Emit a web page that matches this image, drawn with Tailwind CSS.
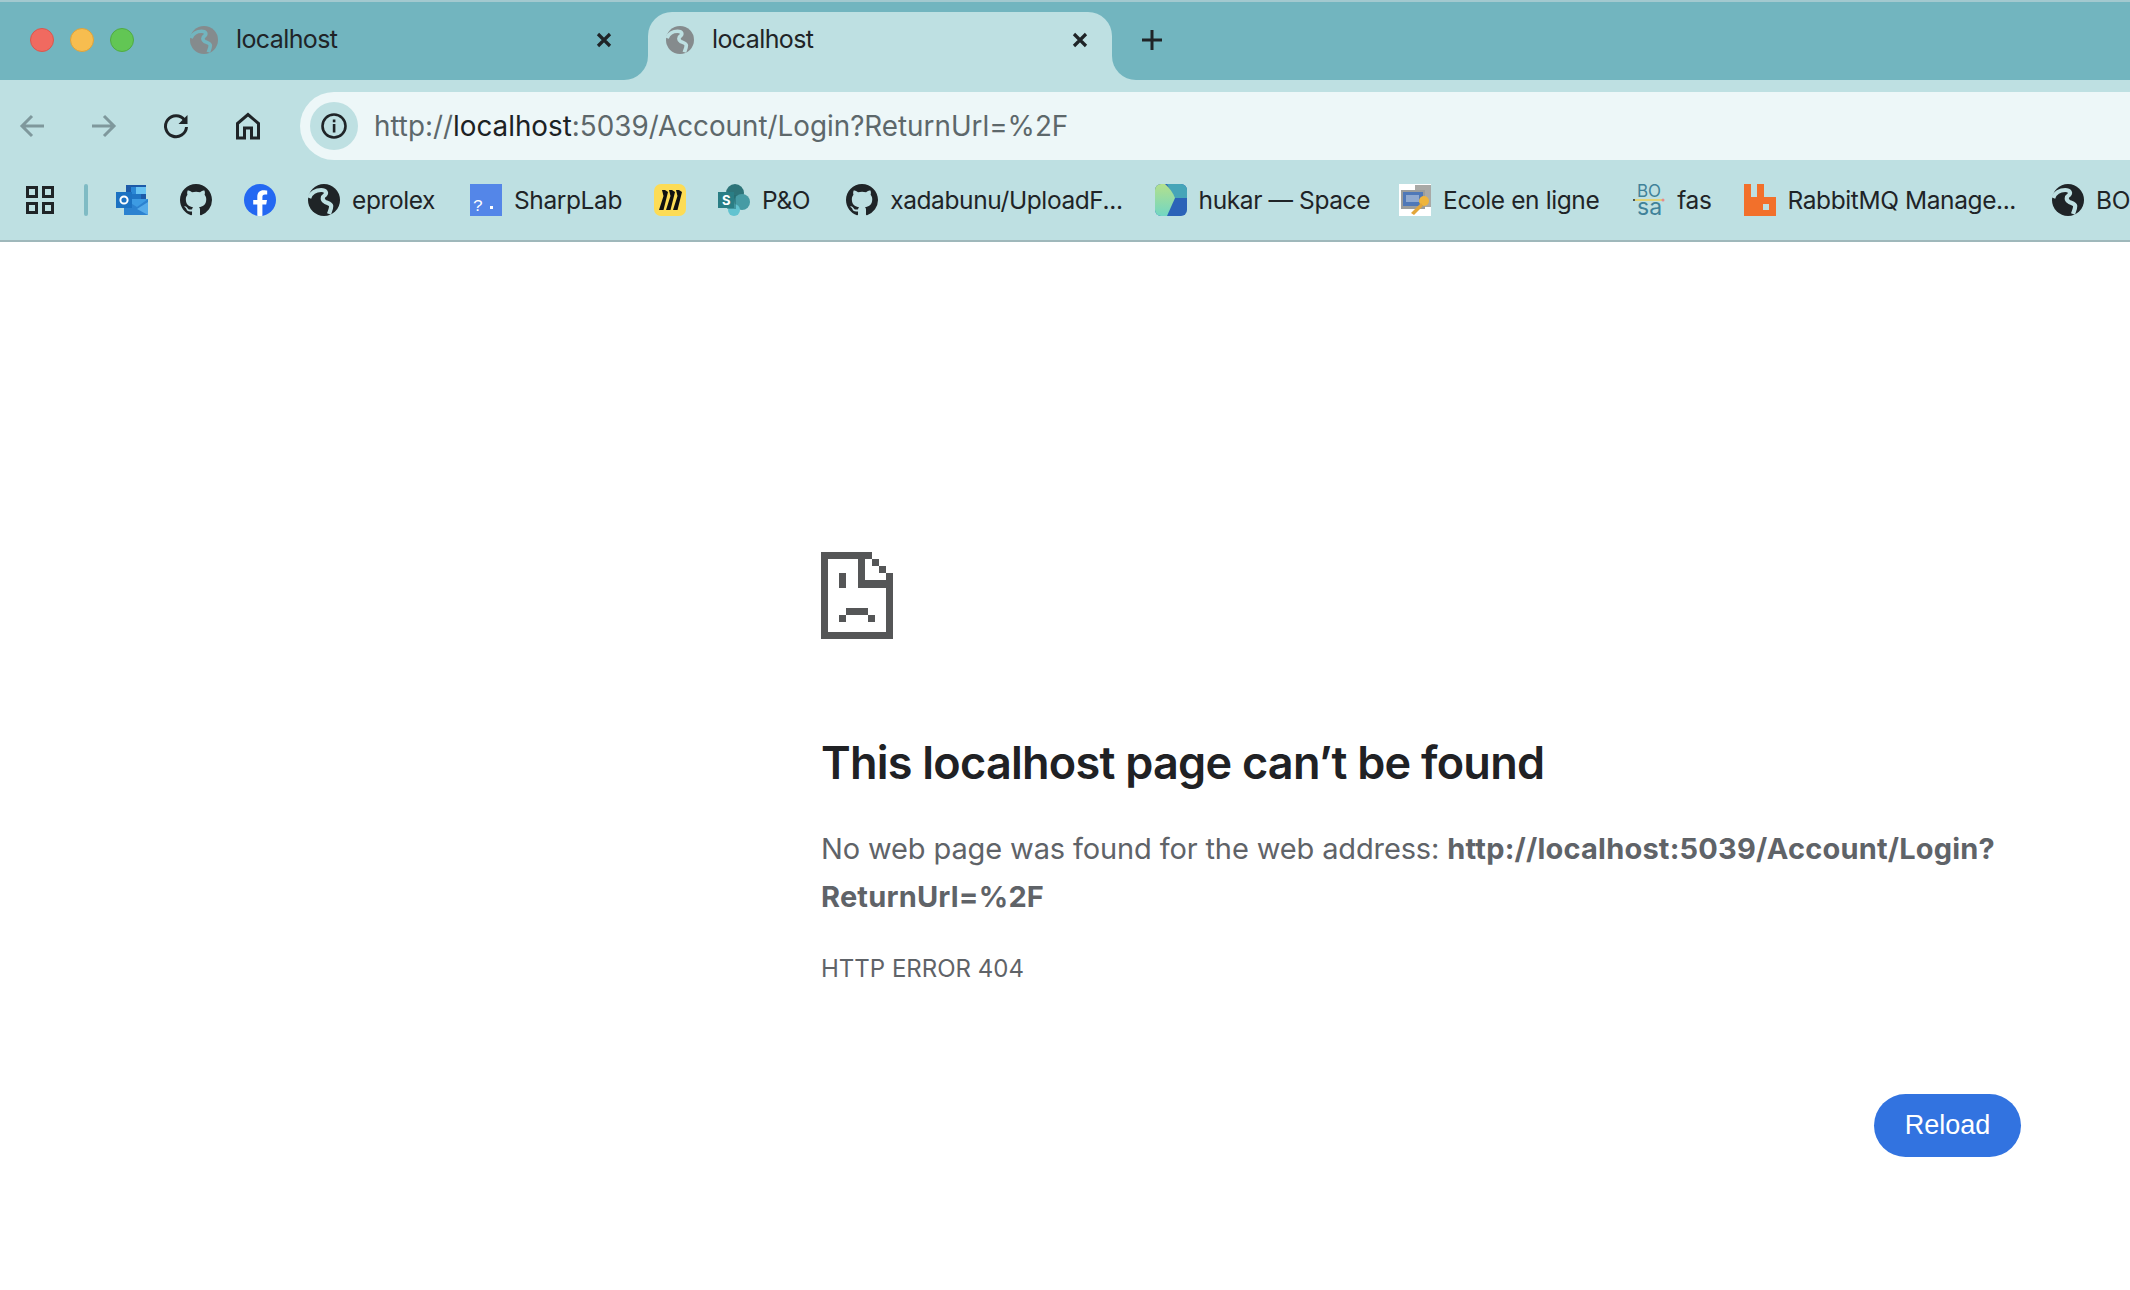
<!DOCTYPE html>
<html lang="en">
<head>
    <meta charset="UTF-8">
    <meta name="viewport" content="width=device-width, initial-scale=1.0">
    <title>localhost</title>
    <script src="https://cdn.jsdelivr.net/npm/@tailwindcss/browser@4"></script>
</head>
<body class="bg-white font-['Inter','Noto_Sans',sans-serif]">
    <div class="w-[2130px] h-[1290px] overflow-hidden flex flex-col">
        <!-- Tab strip -->
        <div class="h-[80px] bg-[#72b5bf] border-t-2 border-[#a3c9cf] flex items-end shrink-0">
            <div class="flex items-center gap-4 pl-[30px] h-[68px] pb-[12px] w-[172px] shrink-0">
                <span class="w-6 h-6 rounded-full bg-[#f06a60] border border-[#d9574e]"></span>
                <span class="w-6 h-6 rounded-full bg-[#f7bd4f] border border-[#dca23c]"></span>
                <span class="w-6 h-6 rounded-full bg-[#62c654] border border-[#50ab43]"></span>
            </div>
            <!-- Inactive tab -->
            <div class="w-[476px] h-[68px] pl-[18px] pr-[32px] pb-[12px] flex items-center shrink-0">
                <svg class="w-7 h-7 shrink-0" viewBox="0 0 16 16"><circle cx="8" cy="8" r="8" fill="#858b8d"/><path d="M0.6 7C1.5 4.5 4 3 6.6 3C9 3 9.5 4.5 8.5 5.5C7 6.5 7 8 8.5 8.9C10 9.6 11.5 9.8 11.6 11C11.6 12.5 11 13.5 10.5 15" fill="none" stroke="#72b5bf" stroke-width="2.1"/></svg>
                <span class="ml-[18px] text-[25px] tracking-[-0.6px] text-[#1f2427] flex-1">localhost</span>
                <svg class="w-6 h-6 shrink-0" viewBox="0 0 24 24"><path d="M6 6L18 18M18 6L6 18" stroke="#1f2427" stroke-width="3.2"/></svg>
            </div>
            <!-- Active tab -->
            <div class="relative w-[464px] h-[68px] pl-[18px] pr-[20px] pb-[12px] flex items-center shrink-0 bg-[#bee0e2] rounded-t-[24px]">
                <span class="absolute bottom-0 -left-6 w-6 h-6 bg-[#bee0e2]"><span class="block w-6 h-6 bg-[#72b5bf] rounded-br-[24px]"></span></span>
                <span class="absolute bottom-0 -right-6 w-6 h-6 bg-[#bee0e2]"><span class="block w-6 h-6 bg-[#72b5bf] rounded-bl-[24px]"></span></span>
                <svg class="w-7 h-7 shrink-0" viewBox="0 0 16 16"><circle cx="8" cy="8" r="8" fill="#858b8d"/><path d="M0.6 7C1.5 4.5 4 3 6.6 3C9 3 9.5 4.5 8.5 5.5C7 6.5 7 8 8.5 8.9C10 9.6 11.5 9.8 11.6 11C11.6 12.5 11 13.5 10.5 15" fill="none" stroke="#bee0e2" stroke-width="2.1"/></svg>
                <span class="ml-[18px] text-[25px] tracking-[-0.6px] text-[#1f2427] flex-1">localhost</span>
                <svg class="w-6 h-6 shrink-0" viewBox="0 0 24 24"><path d="M6 6L18 18M18 6L6 18" stroke="#1f2427" stroke-width="3.2"/></svg>
            </div>
            <div class="h-[68px] pb-[12px] ml-[28px] flex items-center">
                <svg class="w-6 h-6" viewBox="0 0 24 24"><path d="M12 2V22M2 12H22" stroke="#1f2427" stroke-width="3"/></svg>
            </div>
        </div>

        <!-- Toolbar -->
        <div class="h-[92px] bg-[#bee0e2] flex items-center shrink-0 pl-[18px]">
            <svg class="w-7 h-7 shrink-0" viewBox="0 0 28 28"><path d="M26 14H4M14 4L4 14L14 24" fill="none" stroke="#7f989c" stroke-width="3"/></svg>
            <svg class="w-7 h-7 shrink-0 ml-[44px]" viewBox="0 0 28 28"><path d="M2 14H24M14 4L24 14L14 24" fill="none" stroke="#7f989c" stroke-width="3"/></svg>
            <svg class="w-7 h-7 shrink-0 ml-[44px]" viewBox="0 0 28 28"><path d="M22.5 8A10.5 10.5 0 1 0 24.5 15" fill="none" stroke="#1f2427" stroke-width="3"/><path d="M25.5 3V12H16.5Z" fill="#1f2427"/></svg>
            <svg class="w-7 h-7 shrink-0 ml-[44px]" viewBox="0 0 28 28"><path d="M3.5 26V11.5L14 2.5L24.5 11.5V26H17.5V16H10.5V26Z" fill="none" stroke="#1f2427" stroke-width="3"/></svg>
            <div class="ml-[38px] flex-1 h-[68px] bg-[#edf7f8] rounded-l-[34px] flex items-center pl-[10px]">
                <span class="w-12 h-12 rounded-full bg-[#bee0e2] flex items-center justify-center shrink-0">
                    <svg class="w-7 h-7" viewBox="0 0 28 28"><circle cx="14" cy="14" r="11.5" fill="none" stroke="#1f2427" stroke-width="2.6"/><rect x="12.8" y="7.5" width="2.6" height="2.8" fill="#1f2427"/><rect x="12.8" y="12" width="2.6" height="8.5" fill="#1f2427"/></svg>
                </span>
                <span class="ml-4 pt-[2px] text-[27.8px] text-[#5d686b] whitespace-nowrap">http://<span class="text-[#1c2224]">localhost</span>:5039/Account/Login?ReturnUrl=%2F</span>
            </div>
        </div>

        <!-- Bookmarks bar -->
        <div class="h-[70px] pb-[12px] bg-[#bee0e2] border-b-2 border-[#9fb8bb] flex items-center shrink-0 pl-[24px] gap-[32px] text-[24.5px] tracking-[-0.4px] text-[#1f2427] whitespace-nowrap">
            <svg class="w-8 h-8 shrink-0" viewBox="0 0 32 32"><g fill="none" stroke="#1f2427" stroke-width="3"><rect x="3.5" y="3.5" width="9" height="9"/><rect x="19.5" y="3.5" width="9" height="9"/><rect x="3.5" y="19.5" width="9" height="9"/><rect x="19.5" y="19.5" width="9" height="9"/></g></svg>
            <span class="w-1 h-8 rounded bg-[#7fbbc4] shrink-0 -ml-1"></span>
            <!-- Outlook -->
            <svg class="w-8 h-8 shrink-0 -ml-1" viewBox="0 0 32 32"><rect x="10" y="1" width="20" height="15" fill="#1d5aa8"/><rect x="20" y="3" width="10" height="7" fill="#69c3f3"/><rect x="15" y="3" width="5" height="7" fill="#2a87d6"/><rect x="15" y="10" width="10" height="6" fill="#1f74c4"/><path d="M8 15H32V31H8Z" fill="#3d9be3"/><path d="M8 15L21 23L32 15V31H8Z" fill="#2c82d0"/><path d="M32 18L21 25L32 31Z" fill="#55abea"/><rect x="0" y="8" width="16" height="16" fill="#1c72c2"/><circle cx="8" cy="16" r="3.6" fill="none" stroke="#fff" stroke-width="2"/></svg>
            <!-- GitHub -->
            <svg class="w-8 h-8 shrink-0" viewBox="0 0 16 16"><path fill="#1f2427" d="M8 0C3.58 0 0 3.58 0 8c0 3.54 2.29 6.53 5.47 7.59.4.07.55-.17.55-.38 0-.19-.01-.82-.01-1.49-2.01.37-2.53-.49-2.69-.94-.09-.23-.48-.94-.82-1.13-.28-.15-.68-.52-.01-.53.63-.01 1.08.58 1.23.82.72 1.21 1.87.87 2.33.66.07-.52.28-.87.51-1.07-1.78-.2-3.64-.89-3.64-3.95 0-.87.31-1.59.82-2.15-.08-.2-.36-1.02.08-2.12 0 0 .67-.21 2.2.82.64-.18 1.32-.27 2-.27.68 0 1.36.09 2 .27 1.53-1.04 2.2-.82 2.2-.82.44 1.1.16 1.92.08 2.12.51.56.82 1.27.82 2.15 0 3.07-1.87 3.75-3.65 3.95.29.25.54.73.54 1.48 0 1.07-.01 1.93-.01 2.2 0 .21.15.46.55.38A8.013 8.013 0 0016 8c0-4.42-3.58-8-8-8z"/></svg>
            <!-- Facebook -->
            <svg class="w-8 h-8 shrink-0" viewBox="0 0 32 32"><circle cx="16" cy="16" r="16" fill="#2468f2"/><path fill="#fff" d="M22.2 20.6L23 16H18.4V13C18.4 11.7 19 10.5 21.1 10.5H23.2V6.6S21.3 6.3 19.5 6.3C15.7 6.3 13.3 8.6 13.3 12.7V16H9.2V20.6H13.3V31.8A16 16 0 0 0 18.4 31.8V20.6Z"/></svg>
            <!-- eprolex -->
            <span class="flex items-center gap-[12px] shrink-0">
                <svg class="w-8 h-8 shrink-0" viewBox="0 0 16 16"><circle cx="8" cy="8" r="8" fill="#1f2427"/><path d="M0.6 7C1.5 4.5 4 3 6.6 3C9 3 9.5 4.5 8.5 5.5C7 6.5 7 8 8.5 8.9C10 9.6 11.5 9.8 11.6 11C11.6 12.5 11 13.5 10.5 15" fill="none" stroke="#bee0e2" stroke-width="2.1"/></svg>
                eprolex
            </span>
            <!-- SharpLab -->
            <span class="flex items-center gap-[12px] shrink-0 ml-[3px]">
                <svg class="w-8 h-8 shrink-0" viewBox="0 0 32 32"><rect width="32" height="32" fill="#5486e8"/><text x="3" y="27" font-family="Liberation Mono" font-size="17" fill="#fff">?</text><rect x="20" y="22" width="3" height="3" fill="#fff"/></svg>
                SharpLab
            </span>
            <!-- Miro -->
            <svg class="w-8 h-8 shrink-0" viewBox="0 0 32 32"><rect width="32" height="32" rx="7" fill="#fddc55"/><path d="M11 6L8 6L9.5 12L5 26H9.5L14 8ZM18 6L15 6L16.5 12L12 26H16.5L21 8ZM25 6L22 6L23.5 12L19 26H23.5L28 8Z" fill="#111"/></svg>
            <!-- P&O -->
            <span class="flex items-center gap-[12px] shrink-0">
                <svg class="w-8 h-8 shrink-0" viewBox="0 0 32 32"><circle cx="17" cy="9" r="9" fill="#2d7479"/><circle cx="24" cy="18" r="8" fill="#469ba4"/><circle cx="16" cy="26" r="6" fill="#62c3d0"/><rect x="9" y="11" width="9" height="14" fill="#1f6a70" opacity="0.5"/><rect x="0" y="8" width="16" height="16" fill="#2a7e85"/><text x="4" y="21" font-family="Inter" font-weight="700" font-size="13" fill="#fff">S</text></svg>
                P&amp;O
            </span>
            <!-- xadabunu -->
            <span class="flex items-center gap-[12px] shrink-0 ml-[4px]">
                <svg class="w-8 h-8 shrink-0" viewBox="0 0 16 16"><path fill="#1f2427" d="M8 0C3.58 0 0 3.58 0 8c0 3.54 2.29 6.53 5.47 7.59.4.07.55-.17.55-.38 0-.19-.01-.82-.01-1.49-2.01.37-2.53-.49-2.69-.94-.09-.23-.48-.94-.82-1.13-.28-.15-.68-.52-.01-.53.63-.01 1.08.58 1.23.82.72 1.21 1.87.87 2.33.66.07-.52.28-.87.51-1.07-1.78-.2-3.64-.89-3.64-3.95 0-.87.31-1.59.82-2.15-.08-.2-.36-1.02.08-2.12 0 0 .67-.21 2.2.82.64-.18 1.32-.27 2-.27.68 0 1.36.09 2 .27 1.53-1.04 2.2-.82 2.2-.82.44 1.1.16 1.92.08 2.12.51.56.82 1.27.82 2.15 0 3.07-1.87 3.75-3.65 3.95.29.25.54.73.54 1.48 0 1.07-.01 1.93-.01 2.2 0 .21.15.46.55.38A8.013 8.013 0 0016 8c0-4.42-3.58-8-8-8z"/></svg>
                xadabunu/UploadF...
            </span>
            <!-- hukar -->
            <span class="flex items-center gap-[12px] shrink-0">
                <svg class="w-8 h-8 shrink-0" viewBox="0 0 32 32"><defs><linearGradient id="hukarLeft" x1="0" y1="0" x2="0" y2="1"><stop offset="0" stop-color="#b3e08c"/><stop offset="1" stop-color="#72d6c3"/></linearGradient></defs><rect width="32" height="32" rx="6" fill="#2b63b8"/><path d="M6 0H26A6 6 0 0 1 32 6V14H19L12 0Z" fill="#46a5b8"/><path d="M6 0H10C15 4 18 9 20 14L12 32H6A6 6 0 0 1 0 26V6A6 6 0 0 1 6 0Z" fill="url(#hukarLeft)"/></svg>
                hukar — Space
            </span>
            <!-- Ecole en ligne -->
            <span class="flex items-center gap-[12px] shrink-0 -ml-[3px]">
                <svg class="w-8 h-8 shrink-0" viewBox="0 0 32 32"><rect width="32" height="32" fill="#fff"/><rect x="16" y="1" width="16" height="22" fill="#a9a9a6"/><rect x="2" y="6" width="24" height="19" fill="#9b9d9c"/><rect x="4" y="8" width="20" height="14" fill="#4f78b8"/><rect x="7" y="11" width="13" height="7" fill="#8fa9d0"/><circle cx="25" cy="17" r="5" fill="#efb53d"/><path d="M22 19L12 29L15 31L24 22Z" fill="#e2a63a"/></svg>
                Ecole en ligne
            </span>
            <!-- fas -->
            <span class="flex items-center gap-[12px] shrink-0 ml-[2px]">
                <svg class="w-8 h-8 shrink-0" viewBox="0 0 32 32"><text x="4" y="13" font-family="Inter" font-size="17" letter-spacing="0" fill="#3f8299">BO</text><text x="4" y="31" font-family="Inter" font-size="23" letter-spacing="0" fill="#3f8299">sa</text><rect x="2" y="15" width="28" height="2" fill="#dfd277"/><circle cx="1" cy="16" r="1" fill="#222"/><circle cx="30" cy="16" r="1.5" fill="#e58a90"/></svg>
                fas
            </span>
            <!-- RabbitMQ -->
            <span class="flex items-center gap-[12px] shrink-0">
                <svg class="w-8 h-8 shrink-0" viewBox="0 0 32 32"><path fill-rule="evenodd" fill="#f2702b" d="M0 0H7V13H13V0H20V13H32V32H0ZM19 20V26H25V20Z"/></svg>
                RabbitMQ Manage...
            </span>
            <!-- BO -->
            <span class="flex items-center gap-[12px] shrink-0 ml-[4px]">
                <svg class="w-8 h-8 shrink-0" viewBox="0 0 16 16"><circle cx="8" cy="8" r="8" fill="#1f2427"/><path d="M0.6 7C1.5 4.5 4 3 6.6 3C9 3 9.5 4.5 8.5 5.5C7 6.5 7 8 8.5 8.9C10 9.6 11.5 9.8 11.6 11C11.6 12.5 11 13.5 10.5 15" fill="none" stroke="#bee0e2" stroke-width="2.1"/></svg>
                BO
            </span>
        </div>

        <!-- Error page -->
        <main class="ml-[821px] w-[1200px] flex flex-col pt-[310px]">
            <svg class="w-[72px] h-[87px]" viewBox="63 65 216 262" shape-rendering="crispEdges">
                <g fill="#555657">
                    <rect x="63" y="65" width="153" height="22"/>
                    <rect x="63" y="65" width="21" height="262"/>
                    <rect x="63" y="305" width="216" height="22"/>
                    <rect x="258" y="129" width="21" height="198"/>
                    <rect x="173" y="65" width="22" height="107"/>
                    <rect x="173" y="150" width="106" height="22"/>
                    <rect x="216" y="87" width="21" height="21"/>
                    <rect x="237" y="108" width="21" height="21"/>
                    <rect x="117" y="128" width="21" height="44"/>
                    <rect x="138" y="234" width="66" height="21"/>
                    <rect x="117" y="255" width="21" height="21"/>
                    <rect x="204" y="255" width="21" height="21"/>
                </g>
            </svg>
            <h1 class="mt-[94px] text-[45px] leading-[60px] font-semibold tracking-[-0.75px] text-[#202124]">This localhost page can’t be found</h1>
            <p class="mt-[32px] text-[29px] leading-[48px] tracking-[-0.13px] text-[#5f6368]">No web page was found for the web address: <strong class="font-bold tracking-[0.2px]">http://localhost:5039/Account/Login?<br>ReturnUrl=%2F</strong></p>
            <div class="mt-[32px] text-[24px] leading-[32px] text-[#5f6368]">HTTP ERROR 404</div>
            <button class="mt-[109px] self-end w-[147px] h-[63px] rounded-full bg-[#3273e0] text-white text-[27px] font-['Liberation_Sans',sans-serif]">Reload</button>
        </main>
    </div>
</body>
</html>
